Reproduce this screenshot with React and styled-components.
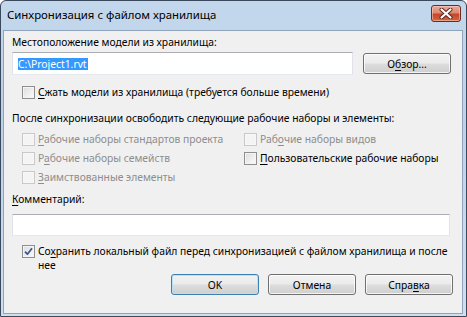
import React from "react";
import styled, { createGlobalStyle } from "styled-components";

const GlobalStyle = createGlobalStyle`
  html, body {
    margin: 0;
    padding: 0;
    background: #ffffff;
  }
  body {
    font-family: "Noto Sans", "DejaVu Sans", sans-serif;
  }
`;

const StyledWindow = styled.div`
  box-sizing: border-box;
  width: 467px;
  height: 317px;
  display: flex;
  flex-direction: column;
  border: 1px solid #3a4a5c;
  border-radius: 6px 6px 0 0;
  background: linear-gradient(180deg, #c3d7ec 0%, #bcd2ea 40%, #cfdff1 100%);
  padding: 0 3px 2px 2px;
`;

const StyledTitleBar = styled.div`
  height: 29px;
  display: flex;
  align-items: flex-start;
  justify-content: space-between;
  flex-shrink: 0;
`;

const StyledTitle = styled.span`
  margin: 7px 0 0 4px;
  font-size: 11.4px;
  line-height: 14px;
  color: #000;
`;

const StyledCloseButton = styled.button`
  box-sizing: border-box;
  width: 30px;
  height: 17px;
  margin: 4px 2px 0 0;
  padding: 0;
  display: flex;
  align-items: center;
  justify-content: center;
  border: 1px solid #6b2a22;
  border-radius: 3px;
  background: linear-gradient(180deg, #e9a999 0%, #dc8a74 45%, #c7452c 55%, #d2673f 100%);
  box-shadow: inset 0 0 0 1px rgba(255, 220, 210, 0.5);
`;

const StyledClient = styled.div`
  flex: 1;
  box-sizing: border-box;
  background: #f0f0f0;
  border: 1px solid #8fa4bb;
  padding: 4px 7px 0 8px;
  display: flex;
  flex-direction: column;
  font-family: "Noto Sans", "DejaVu Sans", sans-serif;
  font-size: 10.3px;
  color: #000;
`;

const StyledLabel = styled.div`
  line-height: 14px;
  margin-top: ${(p) => p.$top || 0}px;
`;

const StyledInputRow = styled.div`
  display: flex;
  align-items: center;
  gap: 10px;
  margin-top: ${(p) => p.$top || 0}px;
`;

const StyledTextBox = styled.div`
  box-sizing: border-box;
  flex: ${(p) => (p.$grow ? 1 : "none")};
  width: ${(p) => (p.$width ? `${p.$width}px` : "auto")};
  height: ${(p) => p.$height || 22}px;
  margin-right: ${(p) => p.$right || 0}px;
  background: #fff;
  border: 1px solid #dbdfe6;
  border-top-color: #abadb3;
  border-left-color: #e2e3ea;
  border-right-color: #e2e3ea;
  border-bottom-color: #e3e9ef;
  display: flex;
  align-items: center;
  padding-left: 5px;
`;

const StyledSelected = styled.span`
  background: #3399ff;
  color: #fff;
  line-height: 12px;
  padding: 0 1px 0 0;
`;

const StyledButton = styled.button`
  box-sizing: border-box;
  width: 88px;
  height: 21px;
  padding: 0;
  font-family: "Noto Sans", "DejaVu Sans", sans-serif;
  font-size: 10.3px;
  color: #000;
  border: 1px solid ${(p) => (p.$default ? "#3c7fb1" : "#707070")};
  border-radius: 3px;
  background: linear-gradient(180deg, #f2f2f2 0%, #ebebeb 49%, #dddddd 51%, #cfcfcf 100%);
  box-shadow: inset 0 0 0 1px
    ${(p) => (p.$default ? "rgba(180, 225, 250, 0.9)" : "rgba(255, 255, 255, 0.75)")};
`;

const StyledCheckRow = styled.label`
  display: flex;
  align-items: ${(p) => (p.$top ? "flex-start" : "center")};
  gap: 3px;
  line-height: 14px;
  color: ${(p) => (p.$disabled ? "#8d8d8d" : "#000")};
  margin-top: ${(p) => p.$mt || 0}px;
  margin-left: ${(p) => p.$ml || 0}px;
`;

const StyledBox = styled.span`
  box-sizing: border-box;
  width: 13px;
  height: 13px;
  flex-shrink: 0;
  display: flex;
  align-items: center;
  justify-content: center;
  margin-top: ${(p) => (p.$top ? 1 : 0)}px;
  border: 1px solid ${(p) => (p.$disabled ? "#c9c9c9" : "#8e8f8f")};
  background: ${(p) =>
    p.$disabled
      ? "#f4f4f4"
      : "linear-gradient(135deg, #dcdcdc 0%, #f0f0f0 60%, #fbfbfb 100%)"};
  box-shadow: inset 0 0 0 1px ${(p) => (p.$disabled ? "#f7f7f7" : "#f4f4f4")};
`;

const StyledGrid = styled.div`
  display: grid;
  grid-template-columns: 222px 1fr;
  row-gap: 5px;
  margin-top: 7px;
  margin-left: 10px;
`;

const StyledFooter = styled.div`
  display: flex;
  justify-content: flex-end;
  gap: 9px;
  margin-top: 2px;
  margin-right: 2px;
`;

const StyledKey = styled.span`
  text-decoration: underline;
  text-underline-offset: 2px;
`;

function CheckBox({ checked, disabled, top }) {
  return (
    <StyledBox $disabled={disabled} $top={top}>
      {checked && (
        <svg width="9" height="9" viewBox="0 0 9 9">
          <path
            d="M1 4.6 L3.4 7.2 L8 1.2"
            fill="none"
            stroke="#3b5a9a"
            strokeWidth="1.8"
            strokeLinejoin="round"
          />
        </svg>
      )}
    </StyledBox>
  );
}

function App() {
  return (
    <>
      <GlobalStyle />
      <StyledWindow>
        <StyledTitleBar>
          <StyledTitle>Синхронизация с файлом хранилища</StyledTitle>
          <StyledCloseButton aria-label="close">
            <svg width="14" height="11" viewBox="0 0 14 11">
              <path
                d="M2.5 1.5 L11.5 9.5 M11.5 1.5 L2.5 9.5"
                stroke="#5a2018"
                strokeWidth="4"
                strokeLinecap="round"
              />
              <path
                d="M2.5 1.5 L11.5 9.5 M11.5 1.5 L2.5 9.5"
                stroke="#ffffff"
                strokeWidth="2.2"
                strokeLinecap="round"
              />
            </svg>
          </StyledCloseButton>
        </StyledTitleBar>

        <StyledClient>
          <StyledLabel $top={0}>Местоположение модели из хранилища:</StyledLabel>
          <StyledInputRow $top={3}>
            <StyledTextBox $width={341} $height={23}>
              <StyledSelected>C:\Project1.rvt</StyledSelected>
            </StyledTextBox>
            <StyledButton>
              О<StyledKey>б</StyledKey>зор...
            </StyledButton>
          </StyledInputRow>

          <StyledCheckRow $mt={10} $ml={10}>
            <CheckBox />
            <span>
              <StyledKey>С</StyledKey>жать модели из хранилища (требуется больше времени)
            </span>
          </StyledCheckRow>

          <StyledLabel $top={12}>
            После синхронизации освободить следующие рабочие наборы и элементы:
          </StyledLabel>

          <StyledGrid>
            <StyledCheckRow $disabled>
              <CheckBox disabled />
              <span>
                <StyledKey>Р</StyledKey>абочие наборы стандартов проекта
              </span>
            </StyledCheckRow>
            <StyledCheckRow $disabled>
              <CheckBox disabled />
              <span>
                Раб<StyledKey>о</StyledKey>чие наборы видов
              </span>
            </StyledCheckRow>
            <StyledCheckRow $disabled>
              <CheckBox disabled />
              <span>
                Р<StyledKey>а</StyledKey>бочие наборы семейств
              </span>
            </StyledCheckRow>
            <StyledCheckRow>
              <CheckBox />
              <span>
                <StyledKey>П</StyledKey>ользовательские рабочие наборы
              </span>
            </StyledCheckRow>
            <StyledCheckRow $disabled>
              <CheckBox disabled />
              <span>
                <StyledKey>З</StyledKey>аимствованные элементы
              </span>
            </StyledCheckRow>
          </StyledGrid>

          <StyledLabel $top={8}>
            <StyledKey>К</StyledKey>омментарий:
          </StyledLabel>
          <StyledInputRow $top={8}>
            <StyledTextBox $grow $right={5} />
          </StyledInputRow>

          <StyledCheckRow $top $mt={8} $ml={10}>
            <CheckBox checked top />
            <span>
              Со<StyledKey>х</StyledKey>ранить локальный файл перед синхронизацией с файлом
              хранилища и после нее
            </span>
          </StyledCheckRow>

          <StyledFooter>
            <StyledButton $default>OK</StyledButton>
            <StyledButton>Отмена</StyledButton>
            <StyledButton>
              Спра<StyledKey>в</StyledKey>ка
            </StyledButton>
          </StyledFooter>
        </StyledClient>
      </StyledWindow>
    </>
  );
}

export default App;
